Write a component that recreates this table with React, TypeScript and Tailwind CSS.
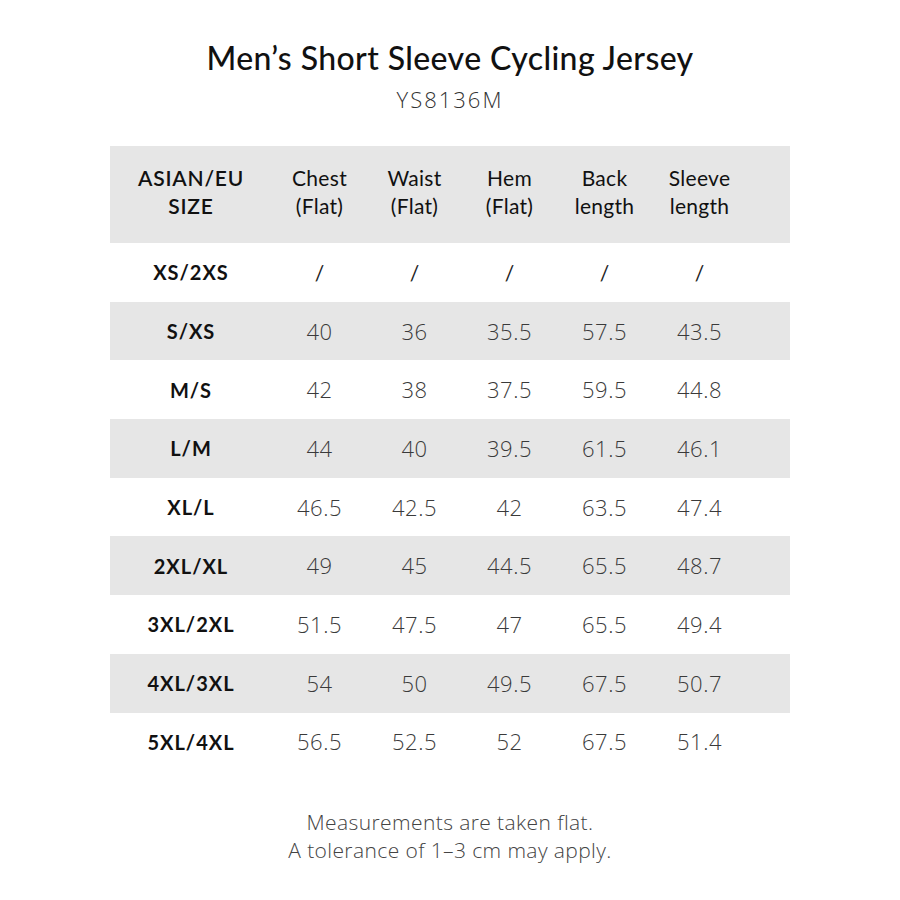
import React from "react";

const rows: string[][] = [
  ["XS/2XS", "/", "/", "/", "/", "/"],
  ["S/XS", "40", "36", "35.5", "57.5", "43.5"],
  ["M/S", "42", "38", "37.5", "59.5", "44.8"],
  ["L/M", "44", "40", "39.5", "61.5", "46.1"],
  ["XL/L", "46.5", "42.5", "42", "63.5", "47.4"],
  ["2XL/XL", "49", "45", "44.5", "65.5", "48.7"],
  ["3XL/2XL", "51.5", "47.5", "47", "65.5", "49.4"],
  ["4XL/3XL", "54", "50", "49.5", "67.5", "50.7"],
  ["5XL/4XL", "56.5", "52.5", "52", "67.5", "51.4"],
];

const headers = [
  ["Chest", "(Flat)"],
  ["Waist", "(Flat)"],
  ["Hem", "(Flat)"],
  ["Back", "length"],
  ["Sleeve", "length"],
];

export default function App() {
  return (
    <div className="w-[900px] h-[900px] bg-white flex flex-col items-center">
      <h1 className="mt-[38px] text-[32px] leading-[40px] font-medium text-[#111] tracking-[0.4px] font-['Lato','Noto_Sans',sans-serif]">
        Men’s Short Sleeve Cycling Jersey
      </h1>
      <div className="mt-[8px] text-[22px] leading-[26px] text-[#333] font-light tracking-[2px] font-['Open_Sans','Liberation_Sans',sans-serif]">
        YS8136M
      </div>
      <div className="mt-[34px] w-[680px] flex flex-col">
        <div className="h-[97px] pb-[5px] bg-[#e6e6e6] flex items-center font-['Lato','Noto_Sans',sans-serif] text-[21px] leading-[28px] text-[#111]">
          <div className="w-[162px] text-center font-semibold tracking-[0.8px]">
            <div>ASIAN/EU</div>
            <div>SIZE</div>
          </div>
          {headers.map((h, i) => (
            <div key={i} className="w-[95px] text-center tracking-[0.3px]">
              <div>{h[0]}</div>
              <div>{h[1]}</div>
            </div>
          ))}
        </div>
        {rows.map((r, ri) => (
          <div
            key={ri}
            className={ri % 2 === 1 ? "h-[58.7px] flex items-center bg-[#e6e6e6]" : "h-[58.7px] flex items-center bg-white"}
          >
            <div className="w-[162px] text-center text-[20px] font-bold text-[#111] tracking-[1px] font-['Lato','Noto_Sans',sans-serif]">
              {r[0]}
            </div>
            {r.slice(1).map((v, ci) => (
              <div
                key={ci}
                className={
                  v === "/"
                    ? "w-[95px] text-center text-[21px] text-[#222] font-['Lato','Noto_Sans',sans-serif]"
                    : "w-[95px] text-center text-[22px] font-light tracking-[0.5px] text-[#3a3a3a] font-['Open_Sans','Liberation_Sans',sans-serif]"
                }
              >
                {v}
              </div>
            ))}
          </div>
        ))}
      </div>
      <div className="mt-[37px] text-center text-[21px] leading-[28px] text-[#444] font-light font-['Open_Sans','Liberation_Sans',sans-serif] tracking-[0.4px]">
        <div>Measurements are taken flat.</div>
        <div>A tolerance of 1–3 cm may apply.</div>
      </div>
    </div>
  );
}
